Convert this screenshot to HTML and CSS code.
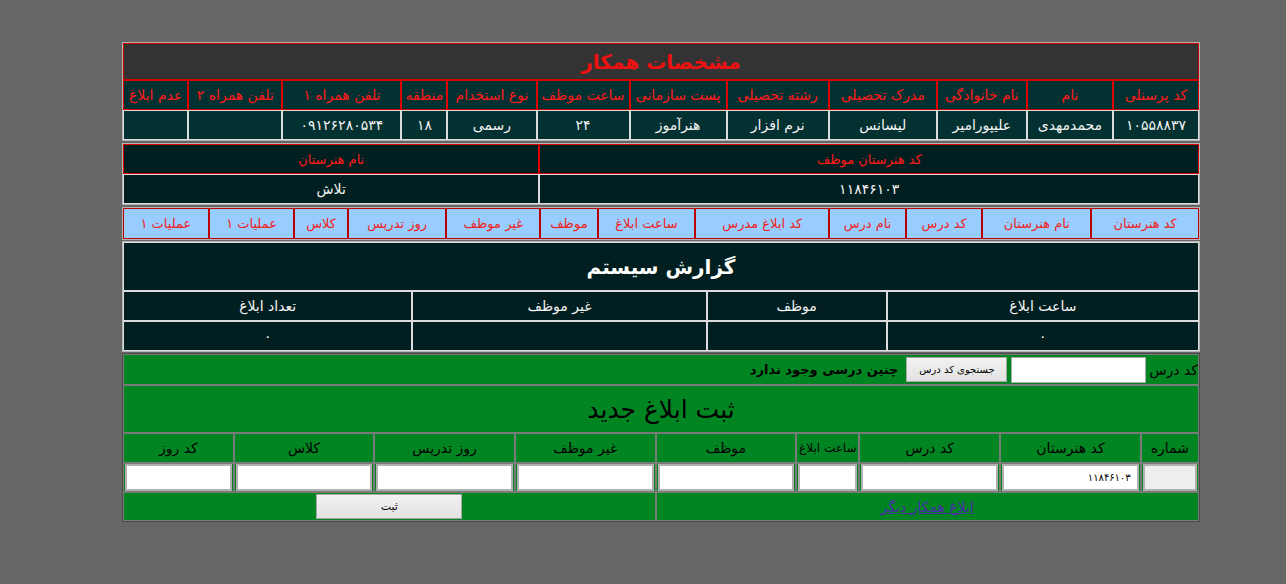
FILE: index.html
```html
<!DOCTYPE html>
<html lang="fa">
<head>
<meta charset="utf-8">
<title>مشخصات همکار</title>
<link rel="stylesheet" href="styles.css">
</head>
<body>
<div class="page">
  <table class="tbl t1">
    <colgroup>
      <col class="c86"><col class="c86"><col class="c90"><col class="c108"><col class="c102"><col class="c97"><col class="c93"><col class="c89"><col class="c46"><col class="c119"><col class="c94"><col class="c65">
    </colgroup>
    <tr><th colspan="12" class="title">مشخصات همکار</th></tr>
    <tr class="hdr">
      <th>کد پرسنلی</th><th>نام</th><th>نام خانوادگی</th><th>مدرک تحصیلی</th><th>رشته تحصیلی</th><th>پست سازمانی</th><th>ساعت موظف</th><th>نوع استخدام</th><th>منطقه</th><th>تلفن همراه ۱</th><th>تلفن همراه ۲</th><th>عدم ابلاغ</th>
    </tr>
    <tr class="data">
      <td>۱۰۵۵۸۸۳۷</td><td>محمدمهدی</td><td>علیپورامیر</td><td>لیسانس</td><td>نرم افزار</td><td>هنرآموز</td><td>۲۴</td><td>رسمی</td><td>۱۸</td><td>۰۹۱۲۶۲۸۰۵۳۴</td><td></td><td></td>
    </tr>
  </table>

  <table class="tbl t2">
    <colgroup><col class="c659"><col class="c416"></colgroup>
    <tr class="hdr"><th>کد هنرستان موظف</th><th>نام هنرستان</th></tr>
    <tr class="data"><td>۱۱۸۴۶۱۰۳</td><td>تلاش</td></tr>
  </table>

  <table class="tbl t3">
    <colgroup>
      <col class="c107"><col class="c108"><col class="c76"><col class="c76"><col class="c133"><col class="c97"><col class="c57"><col class="c93"><col class="c98"><col class="c53"><col class="c85"><col class="c85">
    </colgroup>
    <tr>
      <th>کد هنرستان</th><th>نام هنرستان</th><th>کد درس</th><th>نام درس</th><th>کد ابلاغ مدرس</th><th>ساعت ابلاغ</th><th>موظف</th><th>غیر موظف</th><th>روز تدریس</th><th>کلاس</th><th>عملیات ۱</th><th>عملیات ۱</th>
    </tr>
  </table>

  <table class="tbl t4">
    <colgroup><col class="c312"><col class="c180"><col class="c294"><col class="c289"></colgroup>
    <tr><th colspan="4" class="title">گزارش سیستم</th></tr>
    <tr class="data"><td>ساعت ابلاغ</td><td>موظف</td><td>غیر موظف</td><td>تعداد ابلاغ</td></tr>
    <tr class="data"><td>۰</td><td></td><td></td><td>۰</td></tr>
  </table>

  <table class="tbl t5">
    <colgroup>
      <col class="c58"><col class="c140"><col class="c140"><col class="c63"><col class="c140"><col class="c140"><col class="c140"><col class="c140"><col class="c110">
    </colgroup>
    <tr class="search">
      <td colspan="9">
        <div class="search-line">
          <span class="lbl">کد درس</span>
          <input class="search-input" type="text">
          <button class="btn search-btn" type="button">جستجوی کد درس</button>
          <b class="msg">چنین درسی وجود ندارد</b>
        </div>
      </td>
    </tr>
    <tr><th colspan="9" class="title">ثبت ابلاغ جدید</th></tr>
    <tr class="hdr">
      <th>شماره</th><th>کد هنرستان</th><th>کد درس</th><th class="tight">ساعت ابلاغ</th><th>موظف</th><th>غیر موظف</th><th>روز تدریس</th><th>کلاس</th><th>کد روز</th>
    </tr>
    <tr class="inputs">
      <td><input class="fld ro" type="text"></td>
      <td><input class="fld" type="text" value="۱۱۸۴۶۱۰۳"></td>
      <td><input class="fld" type="text"></td>
      <td><input class="fld" type="text"></td>
      <td><input class="fld" type="text"></td>
      <td><input class="fld" type="text"></td>
      <td><input class="fld" type="text"></td>
      <td><input class="fld" type="text"></td>
      <td><input class="fld" type="text"></td>
    </tr>
    <tr class="foot">
      <td colspan="5"><a class="link" href="#">ابلاغ همکار دیگر</a></td>
      <td colspan="4"><button class="btn save-btn" type="button">ثبت</button></td>
    </tr>
  </table>
</div>
</body>
</html>
```

FILE: styles.css
```css
body {
  margin: 0;
  background: #666666;
  font-family: Tahoma, "DejaVu Sans", sans-serif;
}

.page {
  margin: 42px 0 0 122px;
  width: 1078px;
  direction: rtl;
}

.tbl {
  width: 100%;
  table-layout: fixed;
  border-collapse: separate;
  border-spacing: 0;
  border: 1px solid #b4b4b4;
  margin-bottom: 2px;
}

.tbl th,
.tbl td {
  padding: 0;
  text-align: center;
  font-weight: normal;
  font-size: 13px;
  white-space: nowrap;
  overflow: hidden;
}

.c46 { width: 46px; } .c53 { width: 53px; } .c57 { width: 57px; } .c58 { width: 58px; }
.c63 { width: 63px; } .c65 { width: 65px; } .c76 { width: 76px; } .c85 { width: 85px; }
.c86 { width: 86px; } .c89 { width: 89px; } .c90 { width: 90px; } .c93 { width: 93px; }
.c94 { width: 94px; } .c97 { width: 97px; } .c98 { width: 98px; } .c102 { width: 102px; }
.c107 { width: 107px; } .c108 { width: 108px; } .c110 { width: 110px; } .c119 { width: 119px; }
.c133 { width: 133px; } .c140 { width: 140px; } .c180 { width: 180px; } .c289 { width: 289px; }
.c294 { width: 294px; } .c312 { width: 312px; } .c416 { width: 416px; } .c659 { width: 659px; }

/* table 1 */
.t1 { background: #033031; }
.t1 .title {
  background: #333333;
  color: #ee1111;
  font-size: 20px;
  font-weight: bold;
  height: 35px;
  border: 1px solid #d00000;
}
.t1 .hdr th,
.t2 .hdr th {
  color: #ff1a1a;
  border: 1px solid #dd0000;
  height: 28px;
}
.t1 .hdr th { font-size: 14px; }
.t1 .data td,
.t2 .data td {
  color: #f4f4f4;
  border: 1px solid #dcdcdc;
  height: 28px;
  font-size: 14px;
}

/* table 2 */
.t2 { background: #011f20; }
.t2 .hdr th { font-size: 13px; }

/* table 3 */
.t3 { background: #99ccff; margin-bottom: 1px; }
.t3 th {
  color: #ee2222;
  border: 1px solid #bb0000;
  height: 29px;
  font-size: 13px;
}

/* table 4 */
.t4 { background: #011f20; margin-bottom: 1px; }
.t4 .title {
  color: #ffffff;
  font-size: 20px;
  font-weight: bold;
  height: 47px;
  border: 1px solid #dcdcdc;
}
.t4 .data td {
  color: #f4f4f4;
  border: 1px solid #dcdcdc;
  height: 28px;
  font-size: 14px;
}

/* green table */
.t5 {
  background: #008522;
  border: 1px solid #4a4a4a;
}
.t5 td,
.t5 th {
  color: #000000;
  border: 1px solid #7a7a7a;
}
.search td { height: 29px; }
.search-line {
  display: flex;
  align-items: center;
  gap: 3px;
}
.lbl { font-size: 14px; }
.search-input {
  width: 135px;
  height: 26px;
  box-sizing: border-box;
  border: 1px solid #aaaaaa;
  background: #ffffff;
  margin: 0;
}
.btn {
  background: linear-gradient(#f2f2f2, #e2e2e2);
  border: 1px solid #a8a8a8;
  font-family: Tahoma, "DejaVu Sans", sans-serif;
  font-size: 10px;
  color: #000;
  margin: 0;
  padding: 0;
}
.search-btn { width: 101px; height: 25px; margin-right: 1px; }
.msg { font-size: 13px; margin-right: 5px; }

.t5 .title {
  font-size: 25px;
  height: 46px;
}
.t5 .hdr th {
  font-size: 14px;
  height: 28px;
}
.t5 .hdr .tight {
  font-size: 12px;
  overflow: visible;
}
.inputs td { height: 27px; padding: 0 1px; }
.fld {
  display: block;
  width: 100%;
  height: 27px;
  box-sizing: border-box;
  border: 2px solid #b0b0b0;
  background: #ffffff;
  margin: 0;
  font-family: Tahoma, "DejaVu Sans", sans-serif;
  font-size: 10px;
  padding: 0 6px;
  direction: rtl;
}
.fld.ro { background: #eeeeee; }
.foot td { height: 27px; }
.link {
  color: #4a2aa8;
  font-size: 14px;
  text-decoration: underline;
}
.save-btn { width: 146px; height: 25px; font-size: 11px; }
```
